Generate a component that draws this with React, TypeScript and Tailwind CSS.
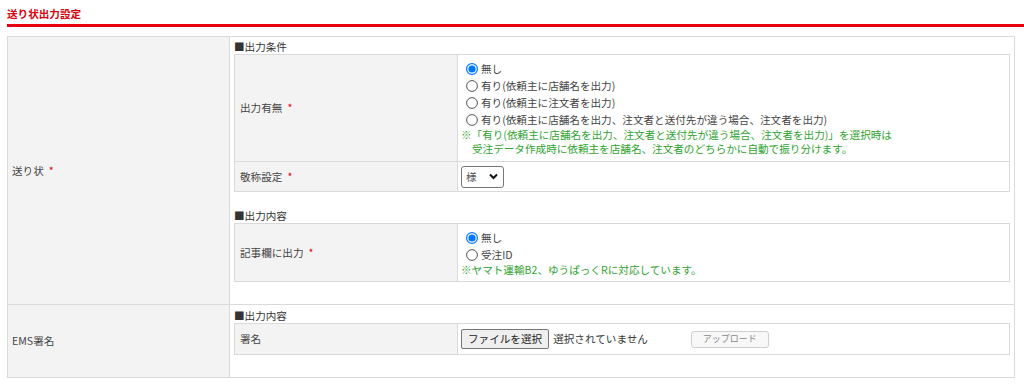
import React from 'react';

const Req: React.FC = () => <span className="ml-[5px] text-[#e60012]">*</span>;

const Radio: React.FC<{ checked?: boolean }> = ({ checked }) => (
  <svg viewBox="0 0 12 12" className="w-[12px] h-[12px] shrink-0">
    {checked ? (
      <>
        <circle cx="6" cy="6" r="5.4" fill="#fff" stroke="#0075ff" strokeWidth="1.2" />
        <circle cx="6" cy="6" r="3.6" fill="#0075ff" />
      </>
    ) : (
      <circle cx="6" cy="6" r="5.4" fill="#fff" stroke="#555" strokeWidth="1" />
    )}
  </svg>
);

const RadioLine: React.FC<{ checked?: boolean; label: string }> = ({ checked, label }) => (
  <div className="flex items-center h-[17px] ml-[5px]">
    <Radio checked={checked} />
    <span className="ml-[3px] leading-[17px]">{label}</span>
  </div>
);

const Caption: React.FC<{ text: string; className?: string }> = ({ text, className }) => (
  <div className={`leading-[14px] text-[#333] ${className ?? ''}`}>■{text}</div>
);

export default function App() {
  return (
    <div className="min-h-screen bg-white pl-[7px] text-[10.6px] text-[#444] font-['Noto_Sans_CJK_JP','Noto_Sans',sans-serif]">
      <h1 className="pt-[6px] h-[24px] leading-[15px] font-bold text-[#d7000f]">送り状出力設定</h1>
      <div className="h-[3px] bg-[#e60012]" />

      <div className="mt-[9px] w-[1008px] border border-[#dadada]">
        {/* 送り状 */}
        <div className="flex border-b border-[#dadada]">
          <div className="w-[222px] shrink-0 flex items-center pl-[4px] bg-[#f3f3f3] border-r border-[#dadada]">
            送り状<Req />
          </div>
          <div className="flex-1 pt-[3px] px-[4px] pb-[22px]">
            <Caption text="出力条件" />
            <div className="border border-[#dadada]">
              <div className="flex border-b border-[#dadada]">
                <div className="w-[223px] shrink-0 flex items-center pl-[5px] bg-[#f3f3f3] border-r border-[#dadada]">
                  出力有無<Req />
                </div>
                <div className="flex-1 pl-[3px] pt-[5px] pb-[5px]">
                  <RadioLine checked label="無し" />
                  <RadioLine label="有り(依頼主に店舗名を出力)" />
                  <RadioLine label="有り(依頼主に注文者を出力)" />
                  <RadioLine label="有り(依頼主に店舗名を出力、注文者と送付先が違う場合、注文者を出力)" />
                  <div className="leading-[14px] text-[#2ea32e]">
                    <div>※「有り(依頼主に店舗名を出力、注文者と送付先が違う場合、注文者を出力)」を選択時は</div>
                    <div className="pl-[11px]">受注データ作成時に依頼主を店舗名、注文者のどちらかに自動で振り分けます。</div>
                  </div>
                </div>
              </div>
              <div className="flex h-[29px]">
                <div className="w-[223px] shrink-0 flex items-center pl-[5px] bg-[#f3f3f3] border-r border-[#dadada]">
                  敬称設定<Req />
                </div>
                <div className="flex-1 flex items-center pl-[3px]">
                  <div className="w-[43px] h-[22px] flex items-center justify-between pl-[4px] pr-[5px] border border-[#767676] rounded-[3px] bg-white text-[#555]">
                    <span>様</span>
                    <svg viewBox="0 0 9 7" className="w-[9px] h-[7px]">
                      <polyline points="1,1.5 4.5,5 8,1.5" fill="none" stroke="#111" strokeWidth="2" />
                    </svg>
                  </div>
                </div>
              </div>
            </div>

            <Caption text="出力内容" className="mt-[16px] leading-[15px]" />
            <div className="border border-[#dadada]">
              <div className="flex">
                <div className="w-[223px] shrink-0 flex items-center pl-[5px] bg-[#f3f3f3] border-r border-[#dadada]">
                  記事欄に出力<Req />
                </div>
                <div className="flex-1 pl-[3px] pt-[5px] pb-[4px]">
                  <RadioLine checked label="無し" />
                  <RadioLine label="受注ID" />
                  <div className="leading-[14px] text-[#2ea32e]">※ヤマト運輸B2、ゆうぱっくRに対応しています。</div>
                </div>
              </div>
            </div>
          </div>
        </div>

        {/* EMS署名 */}
        <div className="flex">
          <div className="w-[222px] shrink-0 flex items-center pl-[4px] bg-[#f3f3f3] border-r border-[#dadada]">
            EMS署名
          </div>
          <div className="flex-1 pt-[3px] px-[4px] pb-[22px]">
            <Caption text="出力内容" className="leading-[15px]" />
            <div className="border border-[#dadada]">
              <div className="flex h-[30px]">
                <div className="w-[223px] shrink-0 flex items-center pl-[5px] bg-[#f3f3f3] border-r border-[#dadada]">
                  署名
                </div>
                <div className="flex-1 flex items-center pl-[3px]">
                  <span className="h-[20px] flex items-center px-[6px] border border-[#767676] rounded-[2px] bg-[#efefef] text-[#222]">
                    ファイルを選択
                  </span>
                  <span className="ml-[4px] text-[#333]">選択されていません</span>
                  <span className="ml-[43px] w-[78px] h-[17px] flex items-center justify-center border border-[#cfcfcf] rounded-[3px] bg-[#f8f8f8] text-[9px] text-[#888]">
                    アップロード
                  </span>
                </div>
              </div>
            </div>
          </div>
        </div>
      </div>
    </div>
  );
}
